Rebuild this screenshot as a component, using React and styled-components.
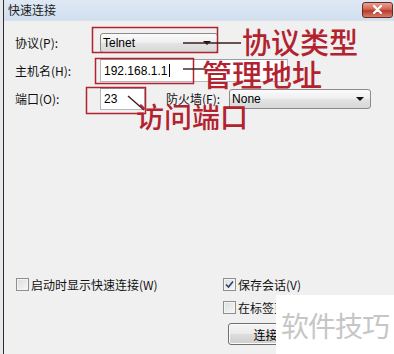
import React from 'react';
import styled, { createGlobalStyle } from 'styled-components';

const GlobalStyle = createGlobalStyle`
  html, body { margin:0; padding:0; background:#fff; }
  body {
    font-family: "Liberation Sans", "Noto Sans CJK SC", sans-serif;
    font-size:12px;
    color:#000;
  }
`;

const Window = styled.div`
  position:relative;
  width:394px;
  height:354px;
  overflow:hidden;
  box-sizing:border-box;
  padding-left:3px;
  background:#e6e8eb;
  display:flex;
`;

const Inner = styled.div`
  flex:1;
  display:flex;
  flex-direction:column;
  border-left:1px solid #2e2e2e;
  background:#f0f0f0;
`;

const TitleBar = styled.div`
  flex:none;
  height:21px;
  box-sizing:border-box;
  display:flex;
  align-items:center;
  justify-content:space-between;
  padding:0 1px 0 4px;
  background:linear-gradient(#dfe9f5, #d1dfef);
  border-bottom:1px solid #d9e1ea;
`;

const Title = styled.span`
  font-family:"Noto Sans CJK SC", sans-serif;
  font-size:12px;
  line-height:14px;
  color:#1c1c1c;
`;

const CloseBtn = styled.div`
  width:29px;
  height:14px;
  margin-top:-1px;
  border:1px solid #6b2a21;
  border-radius:3px;
  display:flex;
  align-items:center;
  justify-content:center;
  background:linear-gradient(#e9a293, #cf6552 45%, #b93a2a 55%, #d57e69);
`;

const Form = styled.div`
  display:grid;
  grid-template-columns:85px 1fr;
  row-gap:6px;
  align-items:center;
  padding:12px 0 0 11px;
`;

const Label = styled.span`
  font-family:"Noto Sans CJK SC", sans-serif;
  font-size:12px;
  line-height:16px;
  color:#111;
  white-space:nowrap;
`;

const Combo = styled.div`
  position:relative;
  width:${p => p.$w}px;
  height:20px;
  box-sizing:border-box;
  border:1px solid #8a8a8a;
  border-radius:3px;
  padding-left:2px;
  display:flex;
  align-items:center;
  font-size:12px;
  background:linear-gradient(#fbfbfb, #eeeeee 50%, #e3e3e3 50%, #d8d8d8);
  &::after {
    content:"";
    position:absolute;
    right:6px;
    top:7px;
    border-left:4px solid transparent;
    border-right:4px solid transparent;
    border-top:4px solid #111;
  }
`;

const TextBox = styled.div`
  width:${p => p.$w}px;
  height:${p => p.$h}px;
  box-sizing:border-box;
  border:1px solid #b5b8bf;
  border-top-color:#9a9da4;
  background:#fff;
  padding-left:3px;
  display:flex;
  align-items:center;
  font-size:12px;
`;

const Caret = styled.span`
  display:inline-block;
  width:1px;
  height:13px;
  margin-left:2px;
  background:#000;
`;

const FieldRow = styled.div`
  display:flex;
  align-items:center;
`;

const FwLabel = styled(Label)`
  margin:0 9px 0 21px;
`;

const Options = styled.div`
  margin-top:auto;
  display:grid;
  grid-template-columns:207px 1fr;
  padding:0 0 9px 12px;
`;

const Column = styled.div`
  display:flex;
  flex-direction:column;
  gap:9px;
`;

const CheckRow = styled.label`
  height:14px;
  display:flex;
  align-items:center;
  gap:2px;
  font-family:"Noto Sans CJK SC", sans-serif;
  font-size:12px;
  color:#111;
  white-space:nowrap;
`;

const Box = styled.span`
  flex:none;
  width:13px;
  height:13px;
  box-sizing:border-box;
  border:1px solid #8e8f8f;
  background:linear-gradient(135deg, #dcdcdc, #f8f8f8);
  box-shadow:inset 0 0 0 1px #f4f4f4;
  display:flex;
  align-items:center;
  justify-content:center;
`;

const Button = styled.div`
  flex:none;
  margin-left:5px;
  width:75px;
  height:22px;
  box-sizing:border-box;
  border:1px solid #707070;
  border-radius:3px;
  display:flex;
  align-items:center;
  justify-content:center;
  font-family:"Noto Sans CJK SC", sans-serif;
  font-size:12px;
  background:linear-gradient(#f4f4f4, #ebebeb 50%, #dddddd 50%, #cfcfcf);
  box-shadow:inset 0 0 0 1px #fbfbfb;
`;

const Watermark = styled.div`
  position:absolute;
  left:276px;
  top:295px;
  right:0;
  bottom:0;
  background:#fff;
  padding:14px 0 0 5px;
  font-family:"Noto Sans CJK SC", sans-serif;
  font-size:28px;
  line-height:32px;
  color:#c6c6c6;
  letter-spacing:-1px;
`;

const Marks = styled.svg`
  position:absolute;
  left:0;
  top:0;
  pointer-events:none;
`;

const Note = styled.span`
  position:absolute;
  left:${p => p.$x}px;
  top:${p => p.$y}px;
  font-family:"Noto Sans CJK SC", sans-serif;
  font-size:${p => p.$size}px;
  font-weight:500;
  line-height:1;
  color:#b2232f;
  white-space:nowrap;
`;

function Check({ checked }) {
  return (
    <Box>
      {checked && (
        <svg width="9" height="9" viewBox="0 0 9 9">
          <path d="M1 4.5 L3.5 7 L8 1.5" fill="none" stroke="#2a3f73" strokeWidth="1.6" />
        </svg>
      )}
    </Box>
  );
}

export default function App() {
  return (
    <>
      <GlobalStyle />
      <Window>
        <Inner>
          <TitleBar>
            <Title>快速连接</Title>
            <CloseBtn>
              <svg width="11" height="9" viewBox="0 0 11 9">
                <path d="M2 1 L9 8 M9 1 L2 8" stroke="#fff" strokeWidth="2.2" strokeLinecap="round" />
              </svg>
            </CloseBtn>
          </TitleBar>

          <Form>
            <Label>协议(P):</Label>
            <Combo $w={118}>Telnet</Combo>

            <Label>主机名(H):</Label>
            <TextBox $w={188} $h={23}>192.168.1.1<Caret /></TextBox>

            <Label>端口(O):</Label>
            <FieldRow>
              <TextBox $w={45} $h={22}>23</TextBox>
              <FwLabel>防火墙(F):</FwLabel>
              <Combo $w={142}>None</Combo>
            </FieldRow>
          </Form>

          <Options>
            <Column>
              <CheckRow><Check />启动时显示快速连接(W)</CheckRow>
            </Column>
            <Column>
              <CheckRow><Check checked />保存会话(V)</CheckRow>
              <CheckRow><Check />在标签页中打开(T)</CheckRow>
              <Button>连接</Button>
            </Column>
          </Options>
        </Inner>

        <Watermark>软件技巧</Watermark>

        <Marks width="394" height="354">
          <g fill="none" stroke="#b2232f" strokeWidth="1.5">
            <rect x="92.5" y="27.5" width="125" height="25" />
            <rect x="95.5" y="58.5" width="98" height="25" />
            <rect x="86.5" y="87.5" width="59" height="26" />
          </g>
          <g stroke="#3a1d1d" strokeWidth="1.4">
            <line x1="183" y1="43" x2="241" y2="43" />
            <line x1="183" y1="69" x2="205" y2="69" />
            <line x1="128" y1="96" x2="144" y2="110" />
          </g>
        </Marks>
        <Note $x={242} $y={27} $size={29}>协议类型</Note>
        <Note $x={202} $y={58} $size={30}>管理地址</Note>
        <Note $x={136} $y={102} $size={28}>访问端口</Note>
      </Window>
    </>
  );
}
